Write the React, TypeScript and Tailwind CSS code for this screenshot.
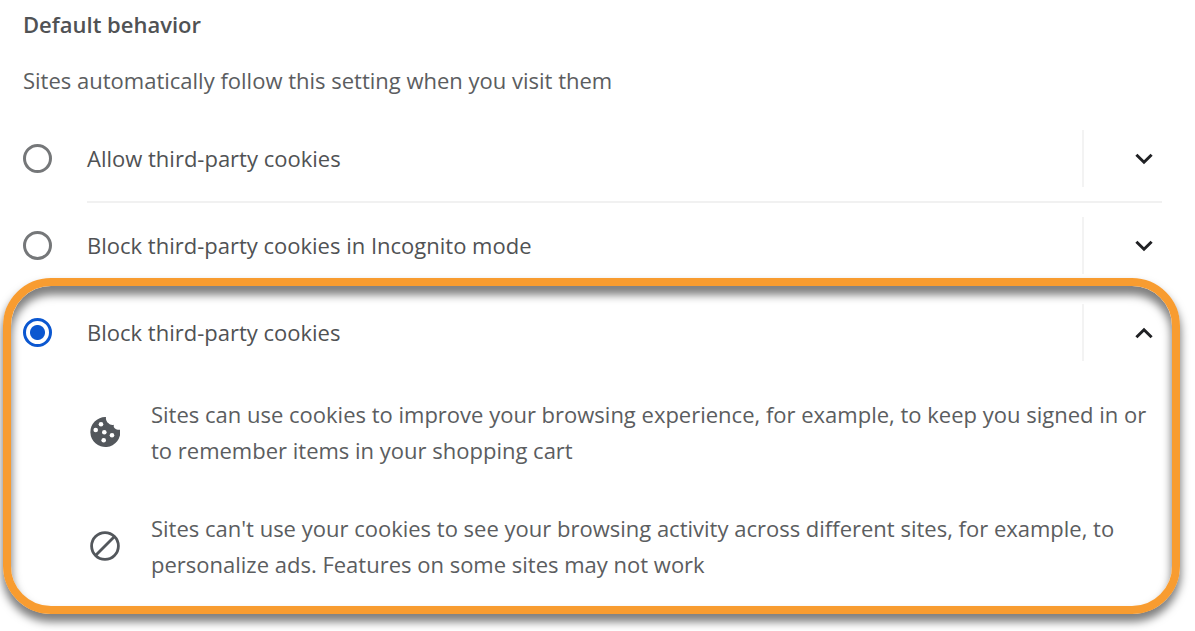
import React, { useState } from "react";

type ChevronProps = { open: boolean };

function Chevron({ open }: ChevronProps) {
  return (
    <svg width="18" height="12" viewBox="0 0 18 12" fill="none" stroke="#202124" strokeWidth="3" aria-hidden="true">
      <path d={open ? "M1.4 10.2 9 2.8l7.6 7.4" : "M1.4 1.8 9 9.2l7.6-7.4"} />
    </svg>
  );
}

function CookieIcon() {
  return (
    <svg className="shrink-0" width="30" height="30" viewBox="0 0 30 30" aria-hidden="true">
      <path
        fill="#53575c"
        d="M15.600 0A15 15 0 1 0 30.200 12.800C27.500 13 24.600 12 23.900 10.200 23.600 9.400 23.700 8.600 23.900 7.700 21.500 8.300 19.600 7.400 18.600 6.200 17.600 6.200 15.400 2.800 16 0Z"
      />
      <g fill="#fff">
        <circle cx="11" cy="7.3" r="2.3" />
        <circle cx="5.7" cy="13" r="2.3" />
        <circle cx="14.300" cy="15.300" r="2.3" />
        <circle cx="22" cy="18.200" r="2.3" />
        <circle cx="13.700" cy="23.300" r="2.3" />
      </g>
    </svg>
  );
}

function BlockIcon() {
  return (
    <svg className="shrink-0" width="30" height="30" viewBox="0 0 30 30" fill="none" stroke="#53575c" strokeWidth="2.8" aria-hidden="true">
      <circle cx="15" cy="15" r="13.4" />
      <path d="M5.500 24.500l19-19" />
    </svg>
  );
}

type OptionProps = {
  value: string;
  label: string;
  selected: string;
  onSelect: (value: string) => void;
};

function Option({ value, label, selected, onSelect }: OptionProps) {
  const open = value === "block";
  return (
    <div className="flex h-[57px] items-center">
      <input
        id={value}
        type="radio"
        name="cookies"
        value={value}
        checked={selected === value}
        onChange={() => onSelect(value)}
        className="size-[29px] shrink-0 appearance-none rounded-full border-3 border-[#757779] bg-white checked:border-[#0b57d0] checked:bg-[radial-gradient(circle,#0b57d0_7px,transparent_8px)]"
      />
      <label htmlFor={value} className="ml-[35px] flex-1 pb-0.5 text-[#505254]">
        {label}
      </label>
      <button
        type="button"
        aria-label={`Details for ${label}`}
        aria-expanded={open}
        className="flex w-20 items-center justify-end self-stretch border-l-2 border-[#f3f3f3] pr-[9px]"
      >
        <Chevron open={open} />
      </button>
    </div>
  );
}

export default function App() {
  const [selected, setSelected] = useState("block");
  return (
    <main className="bg-white pb-[18px] font-['Open_Sans','Noto_Sans',sans-serif] text-[22px] leading-9 text-[#5b5d60]">
      <div className="pr-[33px] pl-[23px]">
        <h2 className="pt-1.5 font-semibold text-[#505254]">Default behavior</h2>
        <p className="mt-5">Sites automatically follow this setting when you visit them</p>
        <div className="mt-8">
          <Option value="allow" label="Allow third-party cookies" selected={selected} onSelect={setSelected} />
        </div>
        <hr className="my-[14px] ml-16 border-t-2 border-[#f1f1f1]" />
        <Option value="incognito" label="Block third-party cookies in Incognito mode" selected={selected} onSelect={setSelected} />
      </div>
      <section className="mt-1 mr-[15px] ml-[3px] rounded-[48px] border-8 border-[#f89c30] pt-[18px] pr-[10px] pb-6 pl-3 shadow-[0_7px_8px_1px_rgba(0,0,0,0.5),inset_0_8px_8px_1px_rgba(0,0,0,0.5)]">
        <Option value="block" label="Block third-party cookies" selected={selected} onSelect={setSelected} />
        <div className="mt-[35px] ml-[67px] flex items-center gap-[31px]">
          <CookieIcon />
          <p>
            Sites can use cookies to improve your browsing experience, for example, to keep you signed in or to remember items in your shopping cart
          </p>
        </div>
        <div className="mt-[42px] ml-[67px] flex items-center gap-[31px]">
          <BlockIcon />
          <p>
            Sites can't use your cookies to see your browsing activity across different sites, for example, to personalize ads. Features on some sites may not work
          </p>
        </div>
      </section>
    </main>
  );
}
